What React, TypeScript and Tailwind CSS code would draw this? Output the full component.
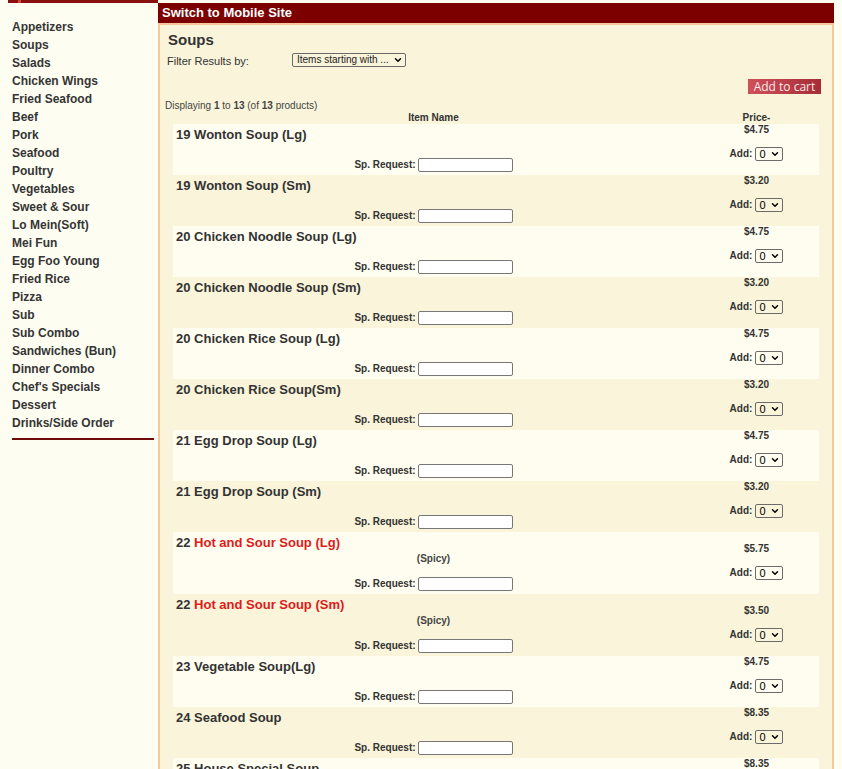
import { ChevronDown } from "lucide-react";

type Soup = {
  num: string;
  name: string;
  price: string;
  spicy?: boolean;
};

const categories = [
  "Appetizers",
  "Soups",
  "Salads",
  "Chicken Wings",
  "Fried Seafood",
  "Beef",
  "Pork",
  "Seafood",
  "Poultry",
  "Vegetables",
  "Sweet & Sour",
  "Lo Mein(Soft)",
  "Mei Fun",
  "Egg Foo Young",
  "Fried Rice",
  "Pizza",
  "Sub",
  "Sub Combo",
  "Sandwiches (Bun)",
  "Dinner Combo",
  "Chef's Specials",
  "Dessert",
  "Drinks/Side Order",
];

const soups: Soup[] = [
  { num: "19", name: "Wonton Soup (Lg)", price: "$4.75" },
  { num: "19", name: "Wonton Soup (Sm)", price: "$3.20" },
  { num: "20", name: "Chicken Noodle Soup (Lg)", price: "$4.75" },
  { num: "20", name: "Chicken Noodle Soup (Sm)", price: "$3.20" },
  { num: "20", name: "Chicken Rice Soup (Lg)", price: "$4.75" },
  { num: "20", name: "Chicken Rice Soup(Sm)", price: "$3.20" },
  { num: "21", name: "Egg Drop Soup (Lg)", price: "$4.75" },
  { num: "21", name: "Egg Drop Soup (Sm)", price: "$3.20" },
  { num: "22", name: "Hot and Sour Soup (Lg)", price: "$5.75", spicy: true },
  { num: "22", name: "Hot and Sour Soup (Sm)", price: "$3.50", spicy: true },
  { num: "23", name: "Vegetable Soup(Lg)", price: "$4.75" },
  { num: "24", name: "Seafood Soup", price: "$8.35" },
  { num: "25", name: "House Special Soup", price: "$8.35" },
];

function QtySelect() {
  return (
    <span className="relative inline-block">
      <select className="block h-[14px] w-[28px] appearance-none rounded-[2px] border border-[#6b6b6b] bg-transparent py-0 pl-[3px] pr-0 text-[11px] leading-[12px] font-normal text-black">
        {[0, 1, 2, 3, 4, 5, 6, 7, 8, 9, 10].map((n) => (
          <option key={n} value={n}>
            {n}
          </option>
        ))}
      </select>
      <ChevronDown
        size={10}
        strokeWidth={3.5}
        className="pointer-events-none absolute right-[3px] top-[2px] text-black"
      />
    </span>
  );
}

export default function App() {
  return (
    <div className="min-h-screen bg-[#fefdf1] font-['Liberation_Sans',Arial,sans-serif] text-[#333]">
      <div className="flex">
        <aside className="w-[158px] shrink-0">
          <div className="ml-2 flex h-[3px] w-[150px] bg-[#8a1010]">
            <span className="ml-[10px] w-[3px] bg-[#d8433f]" />
          </div>
          <nav className="mt-[15px] flex flex-col pl-3">
            {categories.map((c) => (
              <a
                key={c}
                href="#"
                className="self-start text-[12px] leading-[18px] font-bold text-[#353535]"
              >
                {c}
              </a>
            ))}
          </nav>
          <div className="ml-3 mt-[6px] h-[2px] w-[142px] bg-[#6e0a0a]" />
        </aside>

        <main className="w-[676px] shrink-0 pt-[3px]">
          <div className="h-[20px] bg-[#7c0000] pl-1 text-[13px] leading-[20px] font-bold text-white">
            Switch to Mobile Site
          </div>

          <div className="border-2 border-[#f6c89c] bg-[#f9f4da] pb-4">
            <h1 className="pl-2 pt-[6px] text-[15px] leading-[17px] font-bold text-[#333]">
              Soups
            </h1>

            <div className="mt-[4px] flex h-[16px] items-end pl-[7px]">
              <span className="w-[125px] text-[11px] leading-[13px] text-[#333]">
                Filter Results by:
              </span>
              <span className="relative mb-[1px] inline-block">
                <select className="block h-[14px] w-[114px] appearance-none rounded-[2px] border border-[#6b6b6b] bg-transparent py-0 pl-[4px] pr-0 text-[10px] leading-[12px] text-[#222]">
                  <option>Items starting with ...</option>
                  <option>A</option>
                  <option>B</option>
                  <option>C</option>
                </select>
                <ChevronDown
                  size={10}
                  strokeWidth={3.5}
                  className="pointer-events-none absolute right-[3px] top-[2px] text-black"
                />
              </span>
            </div>

            <div className="mt-[11px] flex justify-end pr-[11px]">
              <button className="h-[15px] w-[73px] bg-linear-to-r from-[#d0505a] to-[#a62c37] font-['Open_Sans',sans-serif] text-[12px] leading-[15px] text-[#fde9ea]">
                Add to cart
              </button>
            </div>

            <p className="mt-[6px] pl-[5px] text-[10px] leading-[12px] text-[#444]">
              Displaying <b>1</b> to <b>13</b> (of <b>13</b> products)
            </p>

            <div className="mx-[13px]">
              <div className="flex h-[12px] text-[10px] leading-[12px] font-bold text-[#333]">
                <div className="w-[521px] text-center">Item Name</div>
                <div className="flex-1 text-center">Price-</div>
              </div>

              {soups.map((s, i) => (
                <div
                  key={s.num + s.name}
                  className={
                    "flex " +
                    (s.spicy ? "h-[62px] " : "h-[51px] ") +
                    (i % 2 === 0 ? "bg-[#fffdf0]" : "bg-[#f9f4da]")
                  }
                >
                  <div className="flex w-[521px] flex-col">
                    <div className="pl-[3px] pt-[3px] text-[13px] leading-[15px] font-bold text-[#333]">
                      {s.num}{" "}
                      <span className={s.spicy ? "text-[#e01b1b]" : ""}>
                        {s.name}
                      </span>
                    </div>
                    {s.spicy && (
                      <div className="mt-[3px] text-center text-[10px] leading-[12px] font-bold text-[#444]">
                        (Spicy)
                      </div>
                    )}
                    <div className="mb-[3px] mt-auto flex items-center justify-center gap-[2px]">
                      <span className="text-[10px] leading-[12px] font-bold text-[#333]">
                        Sp. Request:
                      </span>
                      <input
                        type="text"
                        className="h-[14px] w-[95px] rounded-[2px] border border-[#777] bg-white"
                      />
                    </div>
                  </div>
                  <div className="flex flex-1 flex-col items-center justify-end pb-[14px]">
                    <div className="text-[10px] leading-[11px] font-bold text-[#333]">
                      {s.price}
                    </div>
                    <div className="mt-[12px] flex h-[14px] items-center gap-[3px]">
                      <span className="text-[10px] leading-[12px] font-bold text-[#333]">
                        Add:
                      </span>
                      <QtySelect />
                    </div>
                  </div>
                </div>
              ))}
            </div>
          </div>
        </main>
      </div>
    </div>
  );
}
